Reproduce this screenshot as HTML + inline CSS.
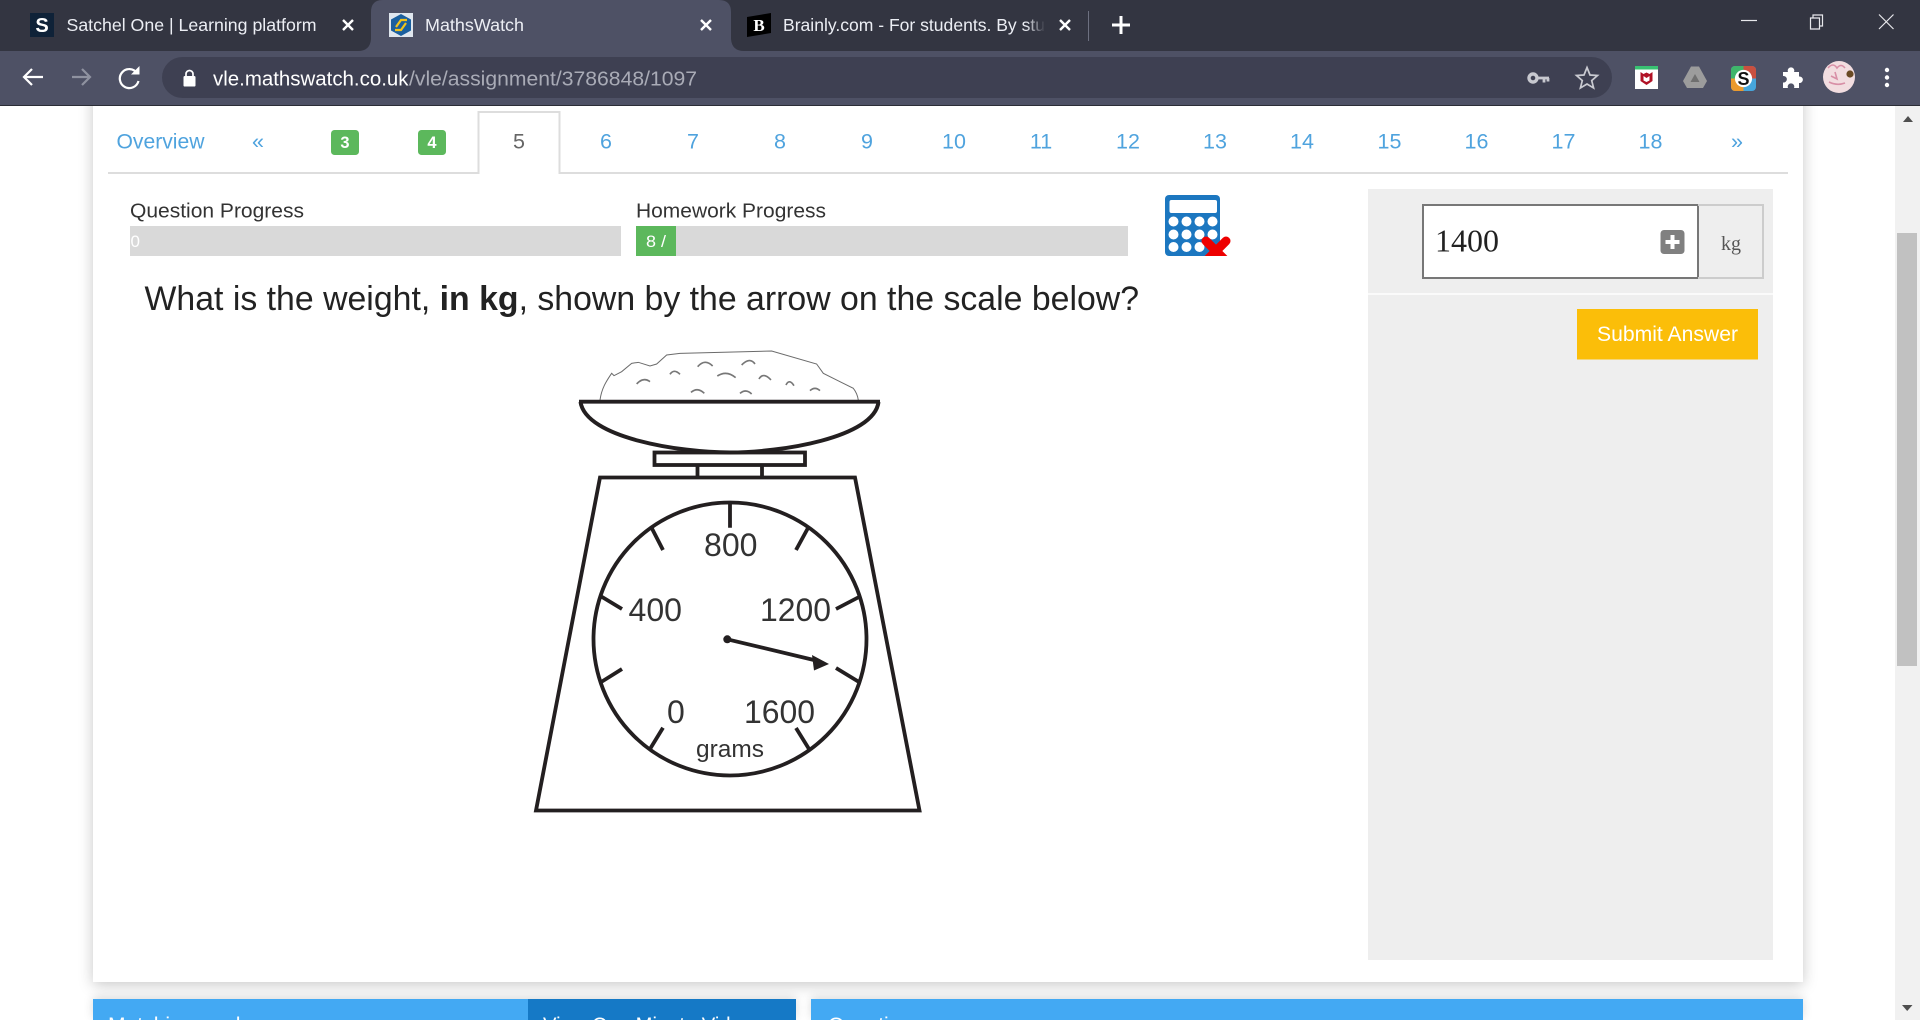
<!DOCTYPE html>
<html lang="en">
<head>
<meta charset="utf-8">
<title>MathsWatch</title>
<style>
html,body{margin:0;padding:0;width:1920px;height:1020px;overflow:hidden;background:#fff;font-family:"Liberation Sans",sans-serif}
#root{position:relative;width:1920px;height:1020px;overflow:hidden;background:#fff}
.a{position:absolute}
svg{position:absolute;left:0;top:0}
text{font-family:"Liberation Sans",sans-serif}
.lnk{fill:#4fa3de;font-size:21.5px;text-anchor:middle}
.tab{fill:#eceef4;font-size:17.5px}
.srf{font-family:"Liberation Serif",serif}
</style>
</head>
<body>
<div id="root">
<div class="a" style="left:93px;top:60px;width:1710px;height:921.5px;background:#fff;box-shadow:0 3px 14px rgba(0,0,0,.22)"></div>
<div class="a" style="left:93px;top:999px;width:703px;height:21px;background:#43a9f3;box-shadow:0 -2px 10px rgba(0,0,0,.14)"></div>
<div class="a" style="left:528px;top:999px;width:268px;height:21px;background:#1579c6"></div>
<div class="a" style="left:811px;top:999px;width:992px;height:21px;background:#43a9f3;box-shadow:0 -2px 10px rgba(0,0,0,.14)"></div>
<div class="a" style="left:1368px;top:189px;width:405px;height:771px;background:#eee"></div>
<div class="a" style="left:1368px;top:293px;width:405px;height:2px;background:#fafafa"></div>
<div class="a" style="left:130px;top:226px;width:491px;height:30px;background:#d9d9d9"></div>
<div class="a" style="left:636px;top:226px;width:492px;height:30px;background:#d9d9d9"></div>
<div class="a" style="left:636px;top:226px;width:40px;height:30px;background:#5cb85c"></div>
<div class="a" style="left:1895px;top:106px;width:25px;height:914px;background:#f1f1f1"></div>
<div class="a" style="left:1897px;top:233px;width:20px;height:433px;background:#c1c1c1"></div>

<svg width="1920" height="1020" viewBox="0 0 1920 1020" xmlns="http://www.w3.org/2000/svg">
<!-- browser chrome -->
<rect x="0" y="0" width="1920" height="51" fill="#333541"/>
<rect x="0" y="51" width="1920" height="54" fill="#4e5165"/>
<rect x="0" y="105" width="1920" height="1" fill="#2b2d36"/>
<path d="M358,51 Q370,51 371,39 L371,12 Q371,0 383,0 L719,0 Q731,0 731,12 L731,39 Q732,51 744,51 Z" fill="#4e5165"/>
<rect x="162" y="57" width="1450" height="41" rx="20.5" fill="#3e4052"/>

<rect x="30" y="13" width="24" height="24" fill="#0f2238"/>
<text x="42" y="32" font-size="20" font-weight="700" fill="#fff" text-anchor="middle">S</text>
<text class="tab" x="66.5" y="31" textLength="250" lengthAdjust="spacingAndGlyphs">Satchel One | Learning platform</text>
<path d="M343,20 L353,30 M353,20 L343,30" stroke="#fff" stroke-width="2.4"/>

<rect x="389" y="13" width="24" height="24" fill="#dfe6ee"/>
<path d="M401,14 L411,19.5 L411,30.5 L401,36 L391,30.5 L391,19.5 Z" fill="#1a5f9e"/>
<path d="M396,27 L401,20 L407,20 M406,23 L401,30 L395,30" fill="none" stroke="#f2c21a" stroke-width="2.2"/>
<text class="tab" x="425" y="31" textLength="99" lengthAdjust="spacingAndGlyphs">MathsWatch</text>
<path d="M701,20 L711,30 M711,20 L701,30" stroke="#fff" stroke-width="2.4"/>

<path d="M747,17 L771,13 L771,33 L747,37 Z" fill="#000"/>
<text x="759" y="31" font-size="17" font-weight="700" fill="#fff" text-anchor="middle" class="srf" style="font-family:'Liberation Serif',serif">B</text>
<text class="tab" x="783" y="31" textLength="262" lengthAdjust="spacingAndGlyphs">Brainly.com - For students. By stu</text>
<defs><linearGradient id="fade" x1="0" x2="1"><stop offset="0" stop-color="#333541" stop-opacity="0"/><stop offset="1" stop-color="#333541"/></linearGradient></defs>
<rect x="1026" y="10" width="19" height="30" fill="url(#fade)"/>
<rect x="1045" y="10" width="40" height="30" fill="#333541"/>
<path d="M1060,20 L1070,30 M1070,20 L1060,30" stroke="#fff" stroke-width="2.4"/>
<rect x="1088" y="11" width="1" height="30" fill="#6d7080"/>
<path d="M1121,16 V34 M1112,25 H1130" stroke="#fff" stroke-width="3"/>

<path d="M1741,20.5 H1757" stroke="#e8e8ec" stroke-width="1.2"/>
<path d="M1810.5,18 H1819.5 V29 H1810.5 Z M1813,18 V15 H1822.5 V26 H1819.5" fill="none" stroke="#e8e8ec" stroke-width="1.2"/>
<path d="M1879,14.5 L1893.5,29 M1893.5,14.5 L1879,29" stroke="#e8e8ec" stroke-width="1.2"/>

<path d="M43,77 H24 M32,69 L24,77 L32,85" fill="none" stroke="#fff" stroke-width="2.2"/>
<path d="M90,77 H72 M82,69 L90,77 L82,85" fill="none" stroke="#8f92a0" stroke-width="2.2"/>
<path d="M137,73 A9.5,9.5 0 1 0 138.5,81" fill="none" stroke="#fff" stroke-width="2.2"/>
<path d="M131,74.5 H139.5 V66 Z" fill="#fff"/>
<rect x="183.5" y="76" width="12" height="10.5" rx="1.3" fill="#fff"/>
<path d="M186,76.5 V74 A3.5,3.5 0 0 1 193,74 V76.5" fill="none" stroke="#fff" stroke-width="1.7"/>
<text x="213" y="85.5" font-size="20" fill="#fff" textLength="195.5" lengthAdjust="spacingAndGlyphs">vle.mathswatch.co.uk</text>
<text x="409" y="85.5" font-size="20" fill="#a9abb6" textLength="288" lengthAdjust="spacingAndGlyphs">/vle/assignment/3786848/1097</text>

<circle cx="1533" cy="78" r="4" fill="none" stroke="#c7c8cf" stroke-width="3.4"/>
<path d="M1537,78 H1549 M1544,78 V82.5 M1548,78 V81.5" stroke="#c7c8cf" stroke-width="2.8"/>
<path d="M1587,67.5 L1590,75 L1597.5,75.5 L1591.7,80.6 L1593.6,88 L1587,84 L1580.4,88 L1582.3,80.6 L1576.5,75.5 L1584,75 Z" fill="none" stroke="#c9cad1" stroke-width="1.7"/>

<rect x="1635" y="66" width="23" height="23" fill="#fff"/>
<rect x="1635" y="66" width="23" height="3.5" fill="#38c172"/>
<path d="M1640.5,72 L1643.5,74 L1646.5,72.5 L1649.5,74 L1652.5,72 V81 L1646.5,85 L1640.5,81 Z" fill="#b11226"/>
<path d="M1643.5,76 V80.5 L1646.5,82 L1649.5,80.5 V76 L1646.5,78 Z" fill="#fff"/>
<path d="M1691,66.5 H1699 L1707,81 L1703,88 H1687 L1683,81 Z" fill="#9c9c9c"/>
<path d="M1695,74 L1699.5,82 H1690.5 Z" fill="#6f6f6f"/>
<rect x="1731" y="66" width="25" height="25" rx="4" fill="#46a6dc"/>
<path d="M1743.5,66 H1735 A4,4 0 0 0 1731,70 V78.5 H1743.5 Z" fill="#3fb56a"/>
<path d="M1743.5,66 H1752 A4,4 0 0 1 1756,70 V78.5 H1743.5 Z" fill="#c9503f"/>
<path d="M1731,78.5 H1743.5 V91 H1735 A4,4 0 0 1 1731,87 Z" fill="#ec9a2d"/>
<circle cx="1743.5" cy="78.5" r="8.6" fill="#fff"/>
<text x="1743.5" y="85" font-size="18" font-weight="700" fill="#111" text-anchor="middle">S</text>
<path d="M1783,72 H1788 A3.3,3.3 0 1 1 1794,72 H1799 V76.5 A3.3,3.3 0 1 1 1799,83 V88 H1794 A3.3,3.3 0 1 0 1788,88 H1783 V82.5 A3.3,3.3 0 1 0 1783,76 Z" fill="#fff"/>
<circle cx="1839" cy="77" r="16" fill="#f2dde0"/>
<circle cx="1850" cy="74" r="3.6" fill="#6a4a24"/>
<path d="M1828,68 q5,-6 9,0 q4,-5 8,0 M1829,82 q8,4 16,1 M1831,76 l6,3 l-2,-7" stroke="#d88fa6" stroke-width="1.6" fill="none"/>
<circle cx="1887" cy="70" r="2.2" fill="#fff"/><circle cx="1887" cy="77.5" r="2.2" fill="#fff"/><circle cx="1887" cy="85" r="2.2" fill="#fff"/>

<!-- nav tabs -->
<path d="M108,173 H478.5 V112 H559.5 V173 H1788" fill="none" stroke="#ddd" stroke-width="2"/>
<text x="116.5" y="148.5" font-size="21.5" fill="#4fa3de" textLength="88" lengthAdjust="spacingAndGlyphs">Overview</text>
<text class="lnk" x="258" y="148.5">«</text>
<rect x="331" y="130" width="28" height="25" rx="3.5" fill="#5cb85c"/>
<text x="345" y="148" font-size="16.5" font-weight="700" fill="#fff" text-anchor="middle">3</text>
<rect x="418" y="130" width="28" height="25" rx="3.5" fill="#5cb85c"/>
<text x="432" y="148" font-size="16.5" font-weight="700" fill="#fff" text-anchor="middle">4</text>
<text x="519" y="148.5" font-size="21.5" fill="#666" text-anchor="middle">5</text>
<text class="lnk" x="606" y="148.5">6</text>
<text class="lnk" x="693" y="148.5">7</text>
<text class="lnk" x="780" y="148.5">8</text>
<text class="lnk" x="867" y="148.5">9</text>
<text class="lnk" x="954" y="148.5">10</text>
<text class="lnk" x="1041" y="148.5">11</text>
<text class="lnk" x="1128" y="148.5">12</text>
<text class="lnk" x="1215" y="148.5">13</text>
<text class="lnk" x="1302" y="148.5">14</text>
<text class="lnk" x="1389.5" y="148.5">15</text>
<text class="lnk" x="1476.5" y="148.5">16</text>
<text class="lnk" x="1563.5" y="148.5">17</text>
<text class="lnk" x="1650.5" y="148.5">18</text>
<text class="lnk" x="1737" y="148.5">»</text>

<!-- progress -->
<text x="130" y="217.5" font-size="20.5" fill="#333" textLength="174" lengthAdjust="spacingAndGlyphs">Question Progress</text>
<text x="636" y="217.5" font-size="20.5" fill="#333" textLength="190" lengthAdjust="spacingAndGlyphs">Homework Progress</text>
<text x="130.5" y="247" font-size="17" fill="#fff">0</text>
<text x="646" y="247" font-size="17" fill="#fff" textLength="20" lengthAdjust="spacingAndGlyphs">8 /</text>

<!-- calculator -->
<rect x="1165" y="195" width="55" height="61" rx="4" fill="#1c77c0"/>
<rect x="1169.5" y="200" width="47.5" height="13" rx="2" fill="#fff"/>
<g fill="#fff">
<circle cx="1173.5" cy="221.5" r="5"/><circle cx="1186.5" cy="221.5" r="5"/><circle cx="1199.5" cy="221.5" r="5"/><circle cx="1212.5" cy="221.5" r="5"/>
<circle cx="1173.5" cy="234.5" r="5"/><circle cx="1186.5" cy="234.5" r="5"/><circle cx="1199.5" cy="234.5" r="5"/><circle cx="1212.5" cy="234.5" r="5"/>
<circle cx="1173.5" cy="247" r="5"/><circle cx="1186.5" cy="247" r="5"/><circle cx="1199.5" cy="247" r="5"/>
</g>
<clipPath id="xc"><rect x="1195" y="230" width="40" height="26"/></clipPath>
<path clip-path="url(#xc)" d="M1206,241 L1228,263 M1226,241 L1204,263" stroke="#ee0000" stroke-width="9" stroke-linecap="round" fill="none"/>

<!-- question -->
<text x="144.5" y="310" font-size="33.8" fill="#222" textLength="994.5" lengthAdjust="spacing">What is the weight, <tspan font-weight="700">in kg</tspan>, shown by the arrow on the scale below?</text>

<!-- scale -->
<g transform="translate(520,340) scale(.3333)" fill="none" stroke="#6b6b6b" stroke-width="3">
<path d="M240,180 C245,145 258,125 275,100 L282,107 L305,95 L335,70 L355,67 L390,78 L410,72 L440,45 L480,40 L755,33 L890,72 L910,100 L960,125 L1000,145 Q1012,160 1015,180"/>
<g stroke-width="5" stroke="#777">
<path d="M350,132 Q370,110 390,125 M450,103 Q462,85 480,103 M533,80 Q555,55 578,78 M592,108 Q620,90 647,113 M665,75 Q690,50 705,72 M717,117 Q730,95 753,120 M798,135 Q808,115 822,137 M513,157 Q533,140 553,160 M660,160 Q678,145 695,162 M870,152 Q885,138 900,152"/>
</g>
</g>
<g fill="none" stroke="#231f20" stroke-width="3.8">
<path d="M579,401.7 H880"/>
<path d="M580.5,402 C586,438 680,452.5 730,452.5 C780,452.5 874,438 878.5,402" stroke-width="4"/>
<rect x="654.5" y="452.5" width="150.5" height="12.5"/>
<path d="M697.5,465 V478 M762,465 V478"/>
<path d="M536,810.5 L600,477.5 H855 L919.5,810.5 Z"/>
<circle cx="730" cy="639" r="136.5"/>
<path d="M730,503 V527.7 M651.7,528 L663,550 M808,528 L796,550 M601.7,596.7 L622,609 M859,597 L836,609 M601.7,681.7 L622,669 M859,682 L836,668 M650,749 L663,727.7 M809,749 L796,728"/>
<path d="M727.3,639.3 L816,660.5"/>
</g>
<circle cx="727.3" cy="639.3" r="4" fill="#231f20"/>
<path d="M829,664 L812,655 L814,670.5 Z" fill="#231f20"/>
<g font-size="32" fill="#333">
<text x="704" y="556" textLength="53.5" lengthAdjust="spacingAndGlyphs">800</text>
<text x="628.5" y="621" textLength="53.5" lengthAdjust="spacingAndGlyphs">400</text>
<text x="760" y="621" textLength="71" lengthAdjust="spacingAndGlyphs">1200</text>
<text x="667" y="723">0</text>
<text x="744" y="723" textLength="71" lengthAdjust="spacingAndGlyphs">1600</text>
<text x="696" y="757" font-size="24.5" textLength="68" lengthAdjust="spacingAndGlyphs">grams</text>
</g>

<!-- answer -->
<rect x="1423" y="205" width="275" height="73" fill="#fff" stroke="#777" stroke-width="2"/>
<path d="M1698,205 H1763 V278 H1698" fill="none" stroke="#ccc" stroke-width="2"/>
<text x="1435" y="251.5" font-size="32" fill="#222" style="font-family:'Liberation Serif',serif">1400</text>
<rect x="1660.5" y="230" width="24" height="24" rx="3.5" fill="#808080"/>
<path d="M1672.5,235 V249 M1665.5,242 H1679.5" stroke="#fff" stroke-width="4"/>
<text x="1731" y="250" font-size="20" fill="#555" text-anchor="middle" style="font-family:'Liberation Serif',serif">kg</text>
<rect x="1577" y="309" width="181" height="50.5" fill="#fbbe09"/>
<text x="1597" y="341" font-size="21" fill="#fff" textLength="141" lengthAdjust="spacingAndGlyphs">Submit Answer</text>

<!-- scrollbar arrows -->
<path d="M1908,116 L1903,122 H1913 Z" fill="#4f4f4f"/>
<path d="M1902,1005 H1912.5 L1907.2,1011 Z" fill="#4f4f4f"/>

<!-- lower panels -->
<text x="108" y="1032" font-size="21" fill="#fff" textLength="143" lengthAdjust="spacingAndGlyphs">Matching cards</text>
<text x="543" y="1032" font-size="21" fill="#fff" textLength="210" lengthAdjust="spacingAndGlyphs">View One Minute Video</text>
<text x="828" y="1032" font-size="21" fill="#fff">Questions</text>
</svg>
</div>
</body>
</html>
